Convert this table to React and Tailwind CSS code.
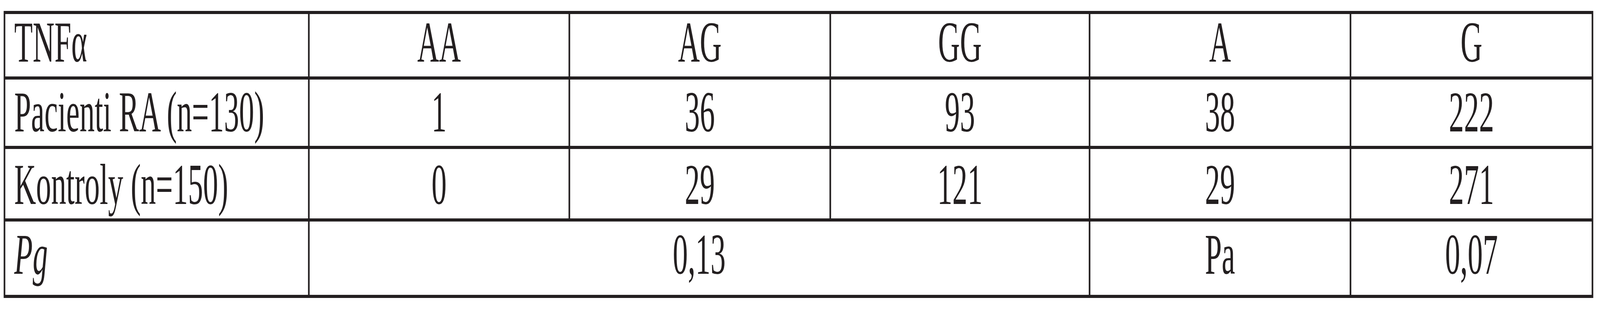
import { useLayoutEffect, useState } from "react";

const REF_W = 7849;
const REF_H = 800;

export default function App() {
  const [scale, setScale] = useState({ x: 1, y: 1 });

  useLayoutEffect(() => {
    const fit = () =>
      setScale({
        x: Math.min(1, window.innerWidth / REF_W),
        y: Math.min(1, window.innerHeight / REF_H),
      });
    fit();
    window.addEventListener("resize", fit);
    return () => window.removeEventListener("resize", fit);
  }, []);

  const font = { fontFamily: '"Liberation Serif", "Times New Roman", serif' };
  const cell = "bg-white text-[148px] leading-[144px] text-[#231f20]";
  const rows = [
    { label: "Pacienti RA (n=130)", vals: ["1", "36", "93", "38", "222"], pt: "pt-[11px]" },
    { label: "Kontroly (n=150)", vals: ["0", "29", "121", "29", "271"], pt: "pt-[19px]" },
  ];

  return (
    <div className="w-full h-[800px] overflow-hidden bg-white">
      <div
        className="bg-white w-[7849px] h-[800px] pt-[28px] pl-[18px] origin-top-left"
        style={{ ...font, transform: `scale(${scale.x}, ${scale.y})` }}
      >
        <div className="grid w-fit bg-[#231f20] p-[8px] gap-[8px] grid-cols-[1485px_1270px_1272px_1264px_1272px_1179px] grid-rows-[160px_170px_178px_188px]">
          <div className={`${cell} pl-[44px] pt-0`}>TNFα</div>
          {["AA", "AG", "GG", "A", "G"].map((h) => (
            <div key={h} className={`${cell} text-center pt-0`}>{h}</div>
          ))}
          {rows.map((r) => (
            <div key={r.label} className="contents">
              <div className={`${cell} pl-[44px] ${r.pt}`}>{r.label}</div>
              {r.vals.map((v, i) => (
                <div key={i} className={`${cell} text-center ${r.pt}`}>{v}</div>
              ))}
            </div>
          ))}
          <div className={`${cell} pl-[44px] pt-[12px] italic`}>Pg</div>
          <div className={`${cell} col-span-3 text-center pt-[12px]`}>0,13</div>
          <div className={`${cell} text-center pt-[12px]`}>Pa</div>
          <div className={`${cell} text-center pt-[12px]`}>0,07</div>
        </div>
      </div>
    </div>
  );
}
